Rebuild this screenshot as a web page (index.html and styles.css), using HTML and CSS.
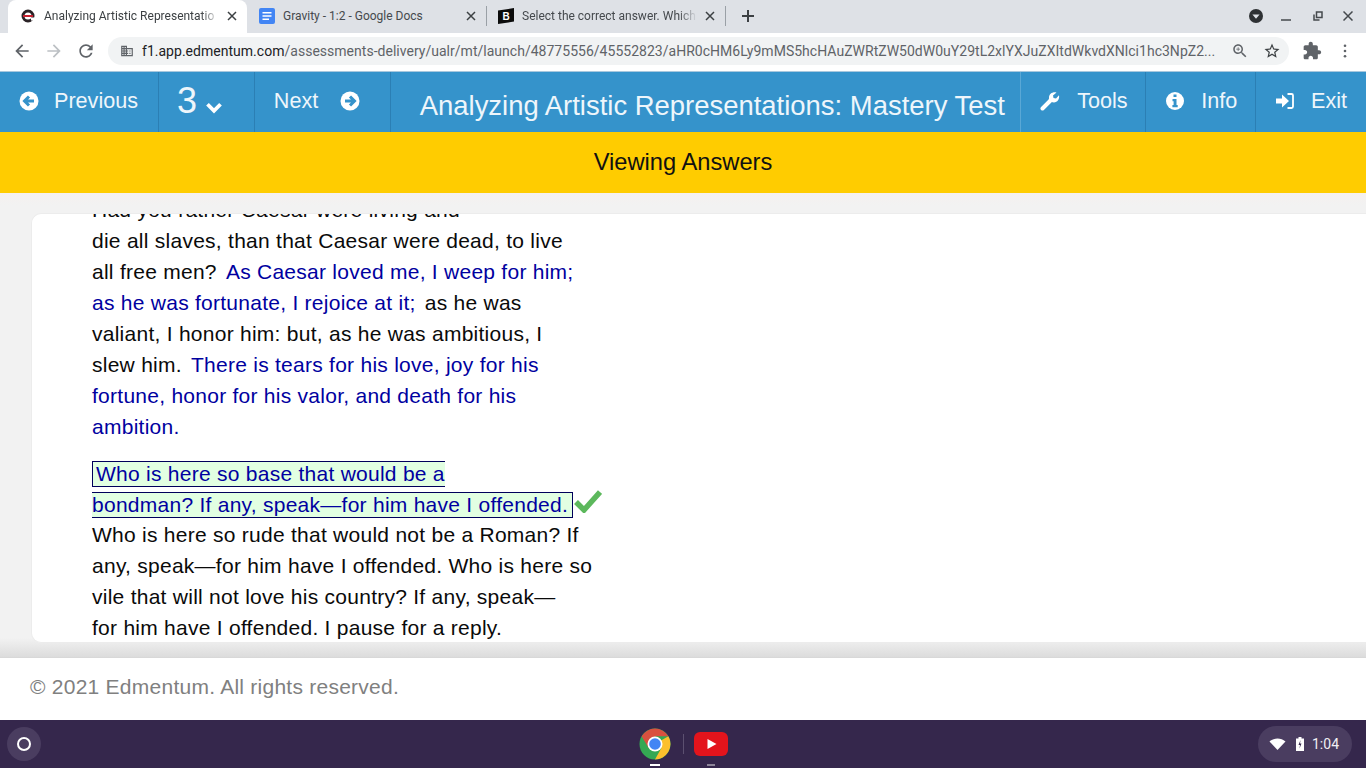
FILE: index.html
```html
<!DOCTYPE html>
<html lang="en">
<head>
<meta charset="utf-8">
<title>Analyzing Artistic Representations: Mastery Test</title>
<link rel="stylesheet" href="styles.css">
</head>
<body>
<header class="tabstrip">
  <div class="tab tab-active">
    <svg class="favicon" viewBox="0 0 16 16"><circle cx="8" cy="8" r="5" fill="none" stroke="#2b2326" stroke-width="3"/><rect x="3" y="7" width="10" height="2" fill="#c8202f"/><path d="M11 9.500h4v3h-4z" fill="#fff"/></svg>
    <span class="tab-title">Analyzing Artistic Representatio</span>
    <svg class="tab-close" viewBox="0 0 10 10"><path d="M1 1l8 8M9 1l-8 8"/></svg>
  </div>
  <div class="tab">
    <svg class="favicon" viewBox="0 0 16 16"><rect width="16" height="16" rx="2" fill="#4285f4"/><path d="M3.500 4h9v1.600h-9zM3.500 7.200h9v1.600h-9zM3.500 10.400h6.500V12H3.500z" fill="#fff"/></svg>
    <span class="tab-title">Gravity - 1:2 - Google Docs</span>
    <svg class="tab-close" viewBox="0 0 10 10"><path d="M1 1l8 8M9 1l-8 8"/></svg>
  </div>
  <div class="tab tab-last">
    <svg class="favicon" viewBox="0 0 16 16"><path d="M0 2.500L16 0v13.500L0 16z" fill="#0b0b0b"/><text x="8" y="11.500" class="fav-b">B</text></svg>
    <span class="tab-title">Select the correct answer. Which</span>
    <svg class="tab-close" viewBox="0 0 10 10"><path d="M1 1l8 8M9 1l-8 8"/></svg>
  </div>
  <svg class="newtab" viewBox="0 0 12 12"><path d="M6 0v12M0 6h12"/></svg>
  <div class="winctl">
    <svg class="wc-drop" viewBox="0 0 14 14"><circle cx="7" cy="7" r="7" fill="#2e3134"/><path d="M3.400 5.400h7.200L7 9.800z" fill="#dee1e6"/></svg>
    <svg class="wc-min" viewBox="0 0 10 10"><path d="M0 9h10"/></svg>
    <svg class="wc-max" viewBox="0 0 10 10"><path d="M3.500 1h5.500v5.500H3.500zM1 3.500v5.500h5.500"/></svg>
    <svg class="wc-close" viewBox="0 0 10 10"><path d="M.5.500l9 9M9.500.500l-9 9"/></svg>
  </div>
</header>

<div class="toolbar">
  <svg class="tb-icon tb-back" viewBox="0 0 24 24"><path d="M20 11H7.830l5.590-5.590L12 4l-8 8 8 8 1.410-1.410L7.830 13H20v-2z"/></svg>
  <svg class="tb-icon tb-fwd" viewBox="0 0 24 24"><path d="M4 11h12.170l-5.590-5.590L12 4l8 8-8 8-1.410-1.410L16.170 13H4v-2z"/></svg>
  <svg class="tb-icon tb-reload" viewBox="0 0 24 24"><path d="M17.650 6.350C16.200 4.900 14.210 4 12 4c-4.420 0-7.990 3.580-7.990 8s3.570 8 7.990 8c3.730 0 6.840-2.550 7.730-6h-2.080c-.82 2.330-3.040 4-5.650 4-3.310 0-6-2.690-6-6s2.690-6 6-6c1.660 0 3.140.69 4.220 1.780L13 11h7V4l-2.350 2.350z"/></svg>
  <div class="omnibox">
    <svg class="om-site" viewBox="0 0 24 24"><path d="M12 7V3H2v18h20V7H12zM6 19H4v-2h2v2zm0-4H4v-2h2v2zm0-4H4V9h2v2zm0-4H4V5h2v2zm4 12H8v-2h2v2zm0-4H8v-2h2v2zm0-4H8V9h2v2zm0-4H8V5h2v2zm10 12h-8v-2h2v-2h-2v-2h2v-2h-2V9h8v10zm-2-8h-2v2h2v-2zm0 4h-2v2h2v-2z"/></svg>
    <span class="url"><span class="url-host">f1.app.edmentum.com</span>/assessments-delivery/ualr/mt/launch/48775556/45552823/aHR0cHM6Ly9mMS5hcHAuZWRtZW50dW0uY29tL2xlYXJuZXItdWkvdXNlci1hc3NpZ2...</span>
    <svg class="om-zoom" viewBox="0 0 24 24"><path d="M15.500 14h-.79l-.28-.27C15.410 12.590 16 11.110 16 9.500 16 5.910 13.090 3 9.500 3S3 5.910 3 9.500 5.910 16 9.500 16c1.610 0 3.090-.59 4.230-1.570l.27.28v.79l5 4.990L20.490 19l-4.990-5zm-6 0C7.010 14 5 11.990 5 9.500S7.010 5 9.500 5 14 7.010 14 9.500 11.990 14 9.500 14zM12 10h-2v2H9v-2H7V9h2V7h1v2h2v1z"/></svg>
    <svg class="om-star" viewBox="0 0 24 24"><path d="M22 9.240l-7.190-.62L12 2 9.190 8.630 2 9.240l5.460 4.730L5.820 21 12 17.270 18.180 21l-1.630-7.030L22 9.240zM12 15.400l-3.760 2.270 1-4.280-3.320-2.880 4.380-.38L12 6.100l1.710 4.040 4.380.38-3.320 2.880 1 4.280L12 15.400z"/></svg>
  </div>
  <svg class="tb-icon tb-ext" viewBox="0 0 24 24"><path d="M20.500 11H19V7c0-1.100-.9-2-2-2h-4V3.500C13 2.120 11.880 1 10.500 1S8 2.120 8 3.500V5H4c-1.100 0-1.990.9-1.990 2v3.800H3.500c1.490 0 2.700 1.210 2.700 2.700s-1.210 2.700-2.700 2.700H2V20c0 1.100.9 2 2 2h3.800v-1.500c0-1.490 1.210-2.700 2.700-2.700 1.490 0 2.700 1.210 2.700 2.700V22H17c1.100 0 2-.9 2-2v-4h1.500c1.380 0 2.500-1.120 2.500-2.500S21.880 11 20.500 11z"/></svg>
  <svg class="tb-dots" viewBox="0 0 4 16"><circle cx="2" cy="2" r="1.500"/><circle cx="2" cy="8" r="1.500"/><circle cx="2" cy="14" r="1.500"/></svg>
</div>

<nav class="navbar">
  <a class="nav-item nav-prev">
    <svg class="fa" viewBox="0 0 20 20"><circle cx="10" cy="10" r="9.500" fill="#fff"/><path class="fa-cut" d="M15 10H6M10 5.500L5.500 10l4.500 4.500"/></svg>
    <span>Previous</span>
  </a>
  <a class="nav-item nav-num"><span class="num">3</span>
    <svg class="chev" viewBox="0 0 16 12"><path d="M2 3l6 6 6-6"/></svg>
  </a>
  <a class="nav-item nav-next">
    <span>Next</span>
    <svg class="fa" viewBox="0 0 20 20"><circle cx="10" cy="10" r="9.500" fill="#fff"/><path class="fa-cut" d="M5 10h9M10 5.500l4.500 4.500-4.500 4.500"/></svg>
  </a>
  <h1 class="nav-title">Analyzing Artistic Representations: Mastery Test</h1>
  <a class="nav-item nav-tools">
    <svg class="fa" viewBox="0 0 20 20"><path class="fa-wrench" d="M2.500 17.500l8.500-8.500"/><path d="M9 6.500C9 3 12.500.5 16.500 1.500l-3.500 3 .5 2.500 2.500.5 3-3.200c.8 4-1.700 7-5 7.200-1 0-2-.2-2.800-.7L8.800 9C8.900 8.200 9 7.300 9 6.500z" fill="#fff"/></svg>
    <span>Tools</span>
  </a>
  <a class="nav-item nav-info">
    <svg class="fa" viewBox="0 0 20 20"><circle cx="10" cy="10" r="9" fill="#fff"/><path d="M8.500 3.500h3v2.500h-3zM7.500 8h4v6h1.200v2.200H7.400V14h1.200v-3.800H7.500z" fill="#3593cb"/></svg>
    <span>Info</span>
  </a>
  <a class="nav-item nav-exit">
    <svg class="fa" viewBox="0 0 20 20"><path d="M1 7.500h6V3.500l7 6.500-7 6.500v-4H1z" fill="#fff"/><path class="fa-line" d="M12.500 3H16.500a1.500 1.500 0 0 1 1.500 1.500v11a1.500 1.500 0 0 1-1.500 1.500H12.500"/></svg>
    <span>Exit</span>
  </a>
</nav>

<div class="banner">Viewing Answers</div>

<main class="content">
  <article class="card">
    <div class="passage">
      <p class="para">Had you rather Caesar were living and<br>
      die all slaves, than that Caesar were dead, to live<br>
      all free men? <span class="blue">As Caesar loved me, I weep for him;<br>
      as he was fortunate, I rejoice at it;</span> as he was<br>
      valiant, I honor him: but, as he was ambitious, I<br>
      slew him. <span class="blue">There is tears for his love, joy for his<br>
      fortune, honor for his valor, and death for his<br>
      ambition.</span></p>
      <p class="para para-answer"><span class="answer">Who is here so base that would be a<br>
      bondman? If any, speak—for him have I offended.</span><svg class="check" viewBox="0 0 28 24"><path d="M2 13l8 8L26 3"/></svg></p>
      <p class="para para-rest">Who is here so rude that would not be a Roman? If<br>
      any, speak—for him have I offended. Who is here so<br>
      vile that will not love his country? If any, speak—<br>
      for him have I offended. I pause for a reply.</p>
    </div>
  </article>
</main>

<footer class="footer">© 2021 Edmentum. All rights reserved.</footer>

<div class="shelf">
  <div class="launcher"><span class="ring"></span></div>
  <div class="pinned">
    <div class="app">
      <svg class="app-icon" viewBox="0 0 32 32"><circle cx="16" cy="16" r="15.500" fill="#34a853"/><path d="M29.400 8.300A15.500 15.500 0 0 1 16 31.500l6.500-11.750L16 16z" fill="#fbc02d"/><path d="M2.600 8.300a15.500 15.500 0 0 1 26.800 0H16L9.500 19.750z" fill="#d9503f"/><circle cx="16" cy="16" r="7.500" fill="#fff"/><circle cx="16" cy="16" r="5.800" fill="#4285f4"/></svg>
      <span class="dot dot-on"></span>
    </div>
    <span class="shelf-sep"></span>
    <div class="app">
      <svg class="app-icon app-yt" viewBox="0 0 34 24"><rect width="34" height="24" rx="6" fill="#e3141c"/><path d="M13.500 7l9 5-9 5z" fill="#fff"/></svg>
      <span class="dot"></span>
    </div>
  </div>
  <div class="tray">
    <svg class="wifi" viewBox="0 0 16 12"><path d="M0 3.500C4.500-.6 11.500-.6 16 3.500L8 12z" fill="#fff"/></svg>
    <svg class="batt" viewBox="0 0 8 14"><path d="M2.500 0h3v1.500H8V14H0V1.500h2.500z" fill="#fff"/><path d="M4.500 3L2.500 8h1.500L3.500 11.500 5.500 6.500H4z" fill="#35274c"/></svg>
    <span class="clock">1:04</span>
  </div>
</div>
</body>
</html>
```

FILE: styles.css
```css
* { box-sizing: border-box; }
html, body { margin: 0; padding: 0; }
body {
  width: 1366px;
  height: 768px;
  overflow: hidden;
  display: flex;
  flex-direction: column;
  font-family: "Liberation Sans", Arial, sans-serif;
  background: #fff;
}
svg { display: block; flex: none; }

/* Browser tab strip */
.tabstrip {
  height: 33px;
  flex: none;
  display: flex;
  align-items: stretch;
  padding-left: 8px;
  background: #dee1e6;
  font-family: Roboto, sans-serif;
  font-size: 12px;
  color: #45494d;
}
.tab {
  width: 239px;
  display: flex;
  align-items: center;
  padding: 0 10px 2px 12px;
  position: relative;
}
.tab::after {
  content: "";
  position: absolute;
  right: -1px;
  top: 6px;
  height: 20px;
  width: 1px;
  background: #9aa0a6;
}
.tab-active {
  background: #fff;
  border-radius: 8px 8px 0 0;
  color: #3c4043;
}
.tab-active::after { display: none; }
.favicon { width: 16px; height: 16px; margin-right: 8px; }
.fav-b { font: bold 10px "Liberation Sans", sans-serif; fill: #fff; text-anchor: middle; }
.tab-title {
  flex: 1;
  min-width: 0;
  white-space: nowrap;
  overflow: hidden;
  line-height: 16px;
  -webkit-mask-image: linear-gradient(to left, transparent 0, #000 18px);
  mask-image: linear-gradient(to left, transparent 0, #000 18px);
}
.tab:nth-child(2) .tab-title { -webkit-mask-image: none; mask-image: none; }
.tab-close { width: 10px; height: 10px; margin-left: 8px; fill: none; stroke: #3c4043; stroke-width: 1.500; }
.newtab { width: 12px; height: 12px; margin: 10px 0 0 17px; fill: none; stroke: #3c4043; stroke-width: 2; }
.winctl { margin-left: auto; display: flex; align-items: center; padding: 0 13px 2px 0; fill: none; stroke: #45494d; stroke-width: 1.500; }
.wc-drop { width: 14px; height: 14px; stroke: none; }
.wc-min { width: 10px; height: 10px; margin-left: 18px; stroke-width: 1.500; }
.wc-max { width: 10px; height: 10px; margin-left: 22px; }
.wc-close { width: 10px; height: 10px; margin-left: 20px; }

/* Browser toolbar */
.toolbar {
  height: 38px;
  flex: none;
  display: flex;
  align-items: center;
  padding: 0 0 2px 12px;
  background: #fff;
}
.tb-icon { width: 20px; height: 20px; fill: #5f6368; }
.tb-fwd { fill: #bcc0c4; margin-left: 12px; }
.tb-reload { margin-left: 12px; }
.omnibox {
  width: 1181px;
  height: 28px;
  margin-left: 12px;
  border-radius: 14px;
  background: #f1f3f4;
  display: flex;
  align-items: center;
  padding-left: 12px;
  font-family: Roboto, sans-serif;
  font-size: 14px;
  letter-spacing: .02px;
  color: #5f6368;
}
.om-site { width: 14px; height: 14px; fill: #5f6368; margin-right: 8px; }
.url { width: 1074px; white-space: nowrap; overflow: hidden; flex: none; }
.url-host { color: #202124; }
.om-zoom { width: 18px; height: 18px; fill: #5f6368; margin-left: 15px; }
.om-star { width: 18px; height: 18px; fill: #3c4043; margin-left: 14px; }
.tb-ext { margin-left: 13px; }
.tb-dots { width: 4px; height: 14px; margin-left: 21px; fill: #5f6368; }

/* Assessment nav */
.navbar {
  height: 61px;
  flex: none;
  display: flex;
  background: #3593cb;
  color: #eef6fb;
  border-top: 1px solid #a8c8de;
}
.nav-item {
  display: flex;
  align-items: center;
  font-size: 21.6px;
  border-right: 1px solid #2b7fb4;
  height: 60px;
  padding-bottom: 2px;
}
.fa { width: 20px; height: 20px; }
.fa-cut { fill: none; stroke: #3593cb; stroke-width: 3; }
.fa-wrench { fill: none; stroke: #fff; stroke-width: 4; stroke-linecap: round; }
.fa-line { fill: none; stroke: #fff; stroke-width: 1.800; }
.nav-prev { width: 159px; padding-left: 19px; gap: 15px; }
.nav-num { width: 96px; padding-left: 18px; gap: 8px; }
.num { font-size: 36px; line-height: 1; }
.chev { width: 18px; height: 13px; margin-top: 12px; fill: none; stroke: #fff; stroke-width: 3.500; }
.nav-next { width: 136px; padding-left: 19px; gap: 22px; }
.nav-title {
  width: 631px;
  margin: 0;
  padding: 7px 0 0 29px;
  display: flex;
  align-items: center;
  font-size: 27.45px;
  font-weight: 400;
  white-space: nowrap;
  border-right: 1px solid #5aa8d6;
  height: 60px;
}
.nav-tools { width: 125px; padding-left: 19px; gap: 17px; }
.nav-info { width: 110px; padding-left: 19px; gap: 16px; }
.nav-exit { width: 110px; padding-left: 19px; gap: 16px; border-right: 0; }

/* Yellow banner */
.banner {
  height: 61px;
  flex: none;
  display: flex;
  align-items: center;
  justify-content: center;
  padding-bottom: 1px;
  background: #ffcc00;
  color: #111;
  font-size: 23.7px;
}

/* Passage */
.content {
  height: 465px;
  flex: none;
  padding: 20px 0 14px 31px;
  background: linear-gradient(to bottom, #f5f0ee 0, #f2f2f2 12px, #f2f2f2 445px, #dcdcdc 100%);
  border-bottom: 1px solid #d8d8d8;
}
.card {
  height: 430px;
  background: #fff;
  border: 1px solid #ececec;
  border-right: 0;
  border-radius: 10px 0 0 10px;
  overflow: hidden;
  padding-left: 60px;
}
.passage {
  margin-top: -20px;
  font-size: 21px;
  line-height: 31px;
  color: #0a0a0a;
  letter-spacing: .26px;
}
.para { margin: 0; white-space: nowrap; }
.para-answer { margin-top: 16px; position: relative; }
.para-rest { margin-top: -1px; }
.blue { color: #0000a0; padding: 0 3px; }
.answer {
  color: #0000a0;
  background: #e2ffe2;
  border: 1px solid #00005a;
  padding: 0 4px 1px 3px;
}
.check {
  position: absolute;
  left: 482px;
  top: 31px;
  width: 28px;
  height: 24px;
  fill: none;
  stroke: #5cb85c;
  stroke-width: 5.500;
}

/* Footer */
.footer {
  height: 62px;
  flex: none;
  display: flex;
  align-items: center;
  padding: 0 0 4px 30px;
  background: #fff;
  font-size: 21px;
  color: #808080;
  letter-spacing: .25px;
}

/* ChromeOS shelf */
.shelf {
  height: 48px;
  flex: none;
  position: relative;
  display: flex;
  align-items: center;
  justify-content: center;
  background: #35274c;
}
.launcher {
  position: absolute;
  left: 7px;
  top: 7px;
  width: 34px;
  height: 34px;
  border-radius: 50%;
  background: #4a3d60;
  display: flex;
  align-items: center;
  justify-content: center;
}
.ring { width: 14px; height: 14px; border: 2px solid #fff; border-radius: 50%; }
.pinned { display: flex; align-items: center; height: 48px; }
.app { width: 56px; height: 48px; display: flex; flex-direction: column; align-items: center; padding-top: 8px; position: relative; }
.app-icon { width: 32px; height: 32px; }
.app-yt { width: 34px; height: 24px; margin-top: 4px; }
.dot { position: absolute; left: 24px; bottom: 2px; width: 8px; height: 2px; background: #8d8599; }
.dot-on { left: 23px; width: 10px; background: #fff; }
.shelf-sep { width: 1px; height: 20px; background: #5c5070; margin: 0 -1px 0 0; }
.tray {
  position: absolute;
  right: 14px;
  top: 6px;
  width: 94px;
  height: 36px;
  border-radius: 18px;
  background: #4a3d60;
  display: flex;
  align-items: center;
  padding-left: 11px;
  color: #f1f0f3;
  font-family: Roboto, sans-serif;
  font-size: 14px;
}
.wifi { width: 17px; height: 12px; }
.batt { width: 8px; height: 14px; margin-left: 10px; }
.clock { margin-left: 8px; }
```
